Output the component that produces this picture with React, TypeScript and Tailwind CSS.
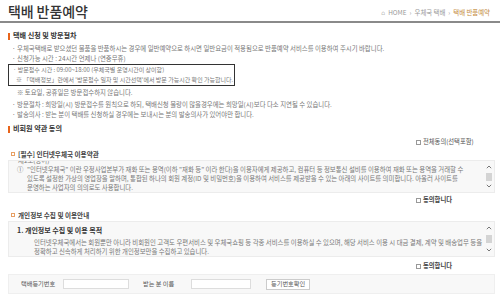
import React from 'react';

const ff = "font-['Noto_Sans_CJK_KR','Noto_Sans',sans-serif]";

function SectionTitle({ children }: { children: React.ReactNode }) {
  return (
    <div className="flex items-center gap-[3px] h-[12px]">
      <span className="w-[2px] h-[7px] bg-[#e8641b]" />
      <span className="text-[7.1px] font-bold text-[#333] leading-none">{children}</span>
    </div>
  );
}

function SubTitle({ children }: { children: React.ReactNode }) {
  return (
    <div className="flex items-center gap-[3px] h-[10px] pl-[3px]">
      <span className="w-[4px] h-[4px] border border-[#e8a064]" />
      <span className="text-[6.6px] font-bold text-[#444] leading-none">{children}</span>
    </div>
  );
}

function Check({ label, bold }: { label: string; bold?: boolean }) {
  return (
    <div className="flex justify-end">
      <div className="w-[79px] flex items-center gap-[2px] h-[10px]">
        <span className="w-[5px] h-[5px] border border-[#999] bg-white" />
        <span className={`text-[6.3px] leading-none ${bold ? 'font-bold text-[#444]' : 'text-[#555]'}`}>{label}</span>
      </div>
    </div>
  );
}

function ScrollBar() {
  return (
    <div className="w-[10px] flex flex-col items-center justify-between py-[4px] shrink-0">
      <svg width="6" height="4" viewBox="0 0 6 4"><path d="M0.8 3.2 L3 1 L5.2 3.2" stroke="#777" strokeWidth="1" fill="none" /></svg>
      <div className="w-[6px] h-[8px] bg-[#d4d4d4]" />
      <svg width="6" height="4" viewBox="0 0 6 4"><path d="M0.8 0.8 L3 3 L5.2 0.8" stroke="#777" strokeWidth="1" fill="none" /></svg>
    </div>
  );
}

const Line = ({ children, cls = '' }: { children: React.ReactNode; cls?: string }) => (
  <div className={`h-[10px] flex items-center text-[6.4px] leading-none text-[#777] whitespace-nowrap ${cls}`}>{children}</div>
);

export default function App() {
  return (
    <div className={`${ff} w-[500px] h-[305px] bg-white overflow-hidden`}>
      {/* header */}
      <div className="flex items-end justify-between pl-[8px] pr-[10px] pt-[4px] pb-[3px] border-b-2 border-[#8a8a8a]">
        <h1 className="text-[14px] font-medium text-[#333] leading-none tracking-[-0.1px]">택배 반품예약</h1>
        <div className="flex items-center gap-[3px] text-[6.4px] text-[#999] leading-none mb-[2px]">
          <span className="text-[#777]">⌂</span>
          <span>HOME</span>
          <span>›</span>
          <span>우체국 택배</span>
          <span>›</span>
          <span className="text-[#c48a3c]">택배 반품예약</span>
        </div>
      </div>

      <div className="pl-[8px] pr-[5px] pt-[7px]">
        <SectionTitle>택배 신청 및 방문절차</SectionTitle>
        <div className="pl-[4px] pt-[2px]">
          <Line>· 우체국택배로 받으셨던 물품을 반품하시는 경우에 일반예약으로 하시면 일반요금이 적용됨으로 반품예약 서비스를 이용하여 주시기 바랍니다.</Line>
          <Line>· 신청가능 시간 : 24시간 언제나 (연중무휴)</Line>
        </div>
        <div className="w-[227px] border-[1.5px] border-[#333] pl-[4px]">
          <Line cls="text-[6px]">· 방문접수 시간 : 09:00~18:00 (우체국별 운영시간이 상이함)</Line>
          <Line cls="pl-[3px] text-[6px]">※ 「택배정보」란에서 '방문접수 일자 및 시간선택'에서 방문 가능시간 확인 가능합니다.</Line>
        </div>
        <div className="pl-[4px] pt-[2px]">
          <Line cls="pl-[5px]">※ 토요일, 공휴일은 방문접수하지 않습니다.</Line>
          <Line cls="mt-[2px]">· 방문절차 : 희망일(시) 방문접수를 원칙으로 하되, 택배신청 물량이 많을경우에는 희망일(시)보다 다소 지연될 수 있습니다.</Line>
          <Line>· 발송의사 : 받는 분이 택배를 신청하실 경우에는 보내시는 분의 발송의사가 있어야만 합니다.</Line>
        </div>

        <div className="mt-[3px]">
          <SectionTitle>비회원 약관 동의</SectionTitle>
        </div>
        <div className="mt-[2px]">
          <Check label="전체동의(선택포함)" />
        </div>
        <div className="mt-[2px]">
          <SubTitle>[필수] 인터넷우체국 이용약관</SubTitle>
        </div>
        <div className="mt-[1px] h-[33px] bg-[#f8f8f8] border border-[#ececec] flex overflow-hidden">
          <div className="flex-1 overflow-hidden pl-[8px] text-[6.4px] text-[#777] leading-[9px] whitespace-nowrap">
            <div className="h-[4px] overflow-hidden flex flex-col justify-end pl-[1px]">
              <div className="h-[9px] shrink-0">제2조(용어)</div>
            </div>
            <div className="flex">
              <span className="w-[10px] shrink-0">①</span>
              <div>
                <div>"인터넷우체국" 이란 우정사업본부가 재화 또는 용역(이하 "재화 등" 이라 한다)을 이용자에게 제공하고, 컴퓨터 등 정보통신 설비를 이용하여 재화 또는 용역을 거래할 수</div>
                <div>있도록 설정한 가상의 영업장을 말하며, 통합된 하나의 회원 계정(ID 및 비밀번호)을 이용하여 서비스를 제공받을 수 있는 아래의 사이트를 의미합니다. 아울러 사이트를</div>
                <div>운영하는 사업자의 의의로도 사용합니다.</div>
              </div>
            </div>
          </div>
          <ScrollBar />
        </div>
        <div className="mt-[2px]">
          <Check label="동의합니다" bold />
        </div>
        <div className="mt-[5px]">
          <SubTitle>개인정보 수집 및 이용안내</SubTitle>
        </div>
        <div className="mt-[1px] h-[36px] bg-[#f8f8f8] border border-[#ececec] flex overflow-hidden">
          <div className="flex-1 overflow-hidden pl-[8px] pt-[4px]">
            <div className="text-[7px] font-bold text-[#333] leading-[9px]">1. 개인정보 수집 및 이용 목적</div>
            <div className="pl-[17px] pt-[3px] text-[6.4px] text-[#777] leading-[9px] whitespace-nowrap">
              <div>인터넷우체국에서는 회원뿐만 아니라 비회원인 고객도 우편서비스 및 우체국쇼핑 등 각종 서비스를 이용하실 수 있으며, 해당 서비스 이용 시 대금 결제, 계약 및 배송업무 등을</div>
              <div>정확하고 신속하게 처리하기 위한 개인정보만을 수집하고 있습니다.</div>
            </div>
          </div>
          <ScrollBar />
        </div>
        <div className="mt-[4px]">
          <Check label="동의합니다" bold />
        </div>
        <div className="mt-[3px] h-[20px] bg-[#f8f8f8] border border-[#efefef] flex items-center text-[6.2px] text-[#555] leading-none">
          <span className="pl-[12px] w-[54px]">택배등기번호</span>
          <span className="w-[66px] h-[10px] bg-white border border-[#ddd]" />
          <span className="pl-[14px] w-[62px]">받는 분 이름</span>
          <span className="w-[60px] h-[10px] bg-white border border-[#ddd]" />
          <span className="ml-[15px] h-[11px] px-[4px] bg-white border border-[#ccc] flex items-center">등기번호확인</span>
        </div>
      </div>
    </div>
  );
}
